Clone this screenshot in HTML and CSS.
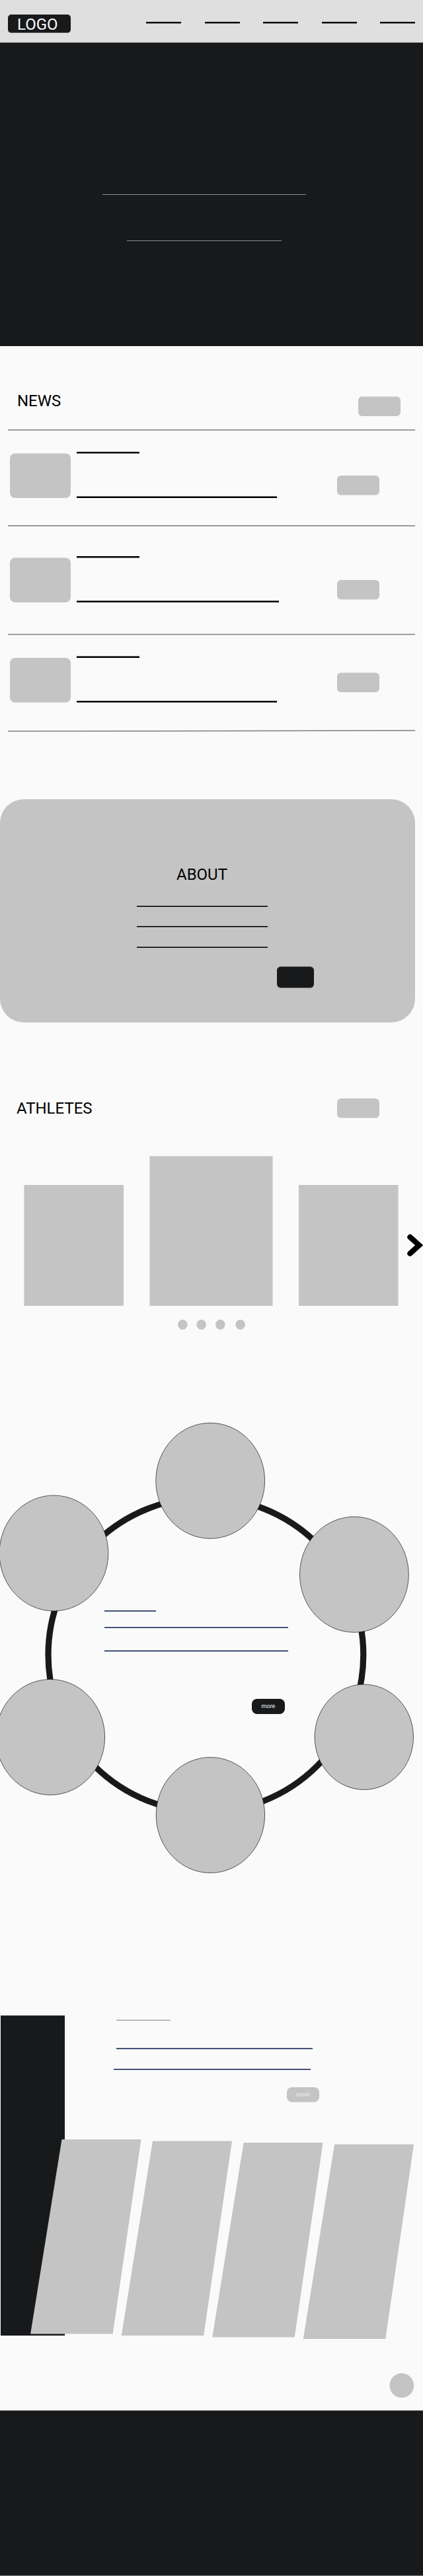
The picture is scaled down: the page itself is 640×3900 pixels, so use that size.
FILE: index.html
```html
<!DOCTYPE html>
<html lang="en">
<head>
<meta charset="utf-8">
<title>Athletes wireframe</title>
<link rel="stylesheet" href="styles.css">
</head>
<body>
<header class="top">
  <a class="logo">LOGO</a>
  <nav class="nav"><i class="bar"></i><i class="bar"></i><i class="bar"></i><i class="bar"></i><i class="bar"></i></nav>
</header>
<section class="hero"><i class="hero-title"></i><i class="hero-sub"></i></section>

<section class="news">
  <div class="news-head"><h2>NEWS</h2><span class="btn soft-top"></span></div>
  <article class="item first">
    <span class="thumb soft-top"></span>
    <div class="copy"><i class="bar"></i><i class="bar up long"></i></div>
    <span class="btn soft-bottom"></span>
  </article>
  <article class="item second">
    <span class="thumb soft-top"></span>
    <div class="copy"><i class="bar"></i><i class="bar up longer"></i></div>
    <span class="btn soft-bottom"></span>
  </article>
  <article class="item third">
    <span class="thumb soft-bottom"></span>
    <div class="copy"><i class="bar up"></i><i class="bar long"></i></div>
    <span class="btn soft-top"></span>
  </article>
  <svg class="end-rule" width="640" height="4" viewBox="0 0 640 4"><path d="M12.3 2.1L628 .9" stroke="#7d7d7d" stroke-width="1.5"/></svg>
</section>

<section class="about">
  <h2>ABOUT</h2>
  <div class="about-lines"><i class="thin up"></i><i class="thin"></i><i class="thin up"></i></div>
  <span class="about-btn"></span>
</section>

<section class="athletes">
  <div class="athletes-head"><h2>ATHLETES</h2><span class="btn soft-bottom"></span></div>
  <div class="carousel">
    <span class="card left"></span><span class="card main"></span><span class="card right"></span>
    <svg class="next" width="25" height="34" viewBox="0 0 25 34"><path d="M5.4 4.9L19.2 17.2L5.4 29.7" fill="none" stroke="#000" stroke-width="8.2" stroke-linecap="round"/></svg>
  </div>
  <svg class="dots" width="640" height="16" viewBox="0 0 640 16"><g fill="#c4c4c4"><ellipse cx="276.3" cy="7.4" rx="7.3" ry="7.5"/><ellipse cx="304.7" cy="7.4" rx="7.3" ry="7.5"/><ellipse cx="333.3" cy="7.4" rx="7.3" ry="7.5"/><ellipse cx="363.7" cy="7.4" rx="7.3" ry="7.5"/></g></svg>
</section>

<section class="ring">
  <svg class="ring-art" width="640" height="690" viewBox="0 2150 640 690">
    <ellipse cx="311.4" cy="2505.3" rx="238.4" ry="237.9" fill="none" stroke="#18191b" stroke-width="9.2"/>
    <g fill="#c4c4c4" stroke="#18191b" stroke-width=".7">
      <ellipse cx="318.2" cy="2241.8" rx="82.4" ry="87.5"/>
      <ellipse cx="81.4" cy="2351.5" rx="82.4" ry="87.5"/>
      <ellipse cx="535.9" cy="2383.8" rx="82.4" ry="87.5"/>
      <ellipse cx="76.2" cy="2630" rx="82.4" ry="87.5"/>
      <ellipse cx="318.4" cy="2748" rx="82.2" ry="87.5"/>
      <ellipse cx="550.8" cy="2629.8" rx="74.7" ry="79.7"/>
    </g>
  </svg>
  <div class="ring-copy">
    <i class="blue short"></i><i class="blue"></i><i class="navy"></i>
    <span class="more">more</span>
  </div>
</section>

<section class="gallery">
  <div class="gallery-top">
    <span class="panel"></span>
    <div class="gallery-copy">
      <i class="hair"></i><i class="navy"></i><i class="blue"></i>
      <span class="more pale">more</span>
    </div>
  </div>
  <svg class="slats" width="640" height="304" viewBox="0 3239 640 304"><g fill="#c4c4c4">
    <path d="M93.5 3239H213.5L170.6 3533.5H46.1z"/>
    <path d="M231 3241.4H351L308.2 3536H183.7z"/>
    <path d="M368.6 3244H488.6L445.7 3538.5H321.2z"/>
    <path d="M506.1 3246.4H626.1L583.3 3541H458.8z"/>
  </g></svg>
  <svg class="to-top" width="38" height="38" viewBox="0 0 38 38"><ellipse cx="18.8" cy="18.6" rx="18.4" ry="18.5" fill="#c4c4c4"/></svg>
</section>
<footer class="footer"></footer>
</body>
</html>
```
FILE: styles.css
```css
* { box-sizing: border-box; }
body { margin: 0; width: 640px; background: #fafafa; color: #000; font-family: Roboto, "Liberation Sans", sans-serif; overflow-x: hidden; }
i, span, svg { display: block; flex: none; }
h2 { margin: 0; font-size: 24px; line-height: 28px; font-weight: 400; }

/* Placeholder strokes */
.bar { width: 53px; height: 3px; background: #000; border-bottom: 1px solid #777; }
.bar.up { border-bottom: 0; border-top: 1px solid #777; }
.thin { height: 2px; background: #000; border-bottom: 1px solid #555; }
.thin.up { border-bottom: 0; border-top: 1px solid #555; }
.blue { height: 2px; background: #435379; }
.navy { height: 3px; background: #06163f; border: solid #b4bdd2; border-width: 1px 0; }
.btn { width: 64px; height: 30px; border-radius: 6px; background: #c4c4c4; }
.soft-top { border-top: 1px solid #dcdcdc; }
.soft-bottom { border-bottom: 1px solid #dcdcdc; }

.top { display: flex; height: 65px; padding: 22px 12px 0; background: #dfdfdf; border-bottom: 1px solid #777; }
.logo { width: 95px; height: 28px; padding-left: 14px; border-radius: 5px; background: #18191b; border-bottom: 1px solid #666; color: #fafafa; font-size: 24px; line-height: 31px; }
.nav { display: flex; justify-content: space-between; width: 407px; margin: 11px 0 0 114px; }

.hero { display: flex; flex-direction: column; height: 459px; padding-top: 229px; background: #18191b; }
.hero-title, .hero-sub { height: 1px; background: #8b8c8d; }
.hero-title { width: 308px; margin-left: 155px; }
.hero-sub { width: 234px; margin: 69px 0 0 192px; }

.news { height: 686px; }
.news-head { display: flex; justify-content: space-between; height: 126px; padding: 69px 34px 0 26px; }
.news-head .btn { margin-top: 7px; }
.item { display: flex; margin: 0 12px; padding-left: 3px; border-top: 2px solid #9a9a9a; }
.first { height: 145px; padding-top: 32px; }
.second { height: 164px; padding-top: 45px; }
.third { height: 146px; padding-top: 35px; border-top: 0; background: linear-gradient(#dcdcdc 1px, #7c7c7c 1px 2px, #dcdcdc 2px) top / 100% 3px no-repeat; }
.thumb { width: 92px; height: 68px; margin-top: 2px; border-radius: 8px; background: #c4c4c4; }
.copy { display: flex; flex-direction: column; justify-content: space-between; width: 306px; height: 70px; margin-left: 9px; }
.copy .bar { width: 95px; }
.copy .long { width: 303px; }
.copy .longer { width: 306px; }
.item .btn { margin: 36px 0 0 88px; }
.third .copy { height: 71px; margin-top: -1px; }
.third .btn { margin-top: 24px; }

.about { width: 628px; height: 338px; padding-top: 100px; border-radius: 36px; background: #c4c4c4; }
.about h2 { padding-left: 267px; }
.about-lines { display: flex; flex-direction: column; justify-content: space-between; width: 198px; height: 64px; margin: 33px 0 0 207px; }
.about-btn { width: 56px; height: 33px; margin: 28px 0 0 419px; border-radius: 6px; background: #18191b; border: solid #666; border-width: 1px 0; }

.athletes { height: 602px; padding-top: 106px; }
.athletes-head { display: flex; justify-content: space-between; height: 96px; padding: 0 66px 0 25px; }
.athletes-head h2 { margin-top: 10px; }
.athletes-head .btn { margin-top: 9px; width: 64px; }
.carousel { display: flex; align-items: flex-end; height: 227px; padding-left: 36px; }
.card { width: 151px; height: 183px; background: #c4c4c4; border-left: 1px solid #dcdcdc; }
.card.main { width: 187px; height: 227px; margin: 0 39px; border: solid #dcdcdc; border-width: 1px 1px 0; }
.card.right { border-left: 0; border-right: 1px solid #dcdcdc; }
.next { margin: 0 0 75px 12px; }
.dots { margin-top: 21px; }

.ring { display: grid; height: 901px; }
.ring-art, .ring-copy { grid-area: 1 / 1; }
.ring-copy { position: relative; display: flex; flex-direction: column; width: 278px; margin: 288px 0 0 158px; }
.ring-copy .short { width: 78px; margin-bottom: 23px; }
.ring-copy .navy { margin: 33px 0 71px; }
.more { width: 50px; height: 23px; margin-left: 223px; border-radius: 8px; background: #18191b; color: #fafafa; font-size: 9px; line-height: 23px; text-align: center; }

.gallery { display: grid; grid-template-rows: 188px 410px; height: 598px; }
.gallery-top { display: flex; }
.panel { width: 97px; height: 485px; margin-left: 1px; background: #18191b; border-top: 1px solid #777; }
.gallery-copy { width: 311px; margin: 7px 0 0 74px; }
.hair { width: 82px; height: 1px; margin-left: 4px; background: #858585; }
.gallery-copy .navy { width: 297px; margin: 41px 0 29px 4px; }
.gallery-copy .blue { width: 298px; }
.more.pale { width: 49px; margin: 26px 0 0 262px; background: #c4c4c4; border-bottom: 1px solid #dcdcdc; color: #f0f0f0; }
.slats { position: relative; grid-area: 2 / 1; }
.to-top { grid-area: 2 / 1; margin: 354px 0 0 589px; }
.footer { height: 251px; background: #18191b; border: solid #808080; border-width: 1px 0; }
```
